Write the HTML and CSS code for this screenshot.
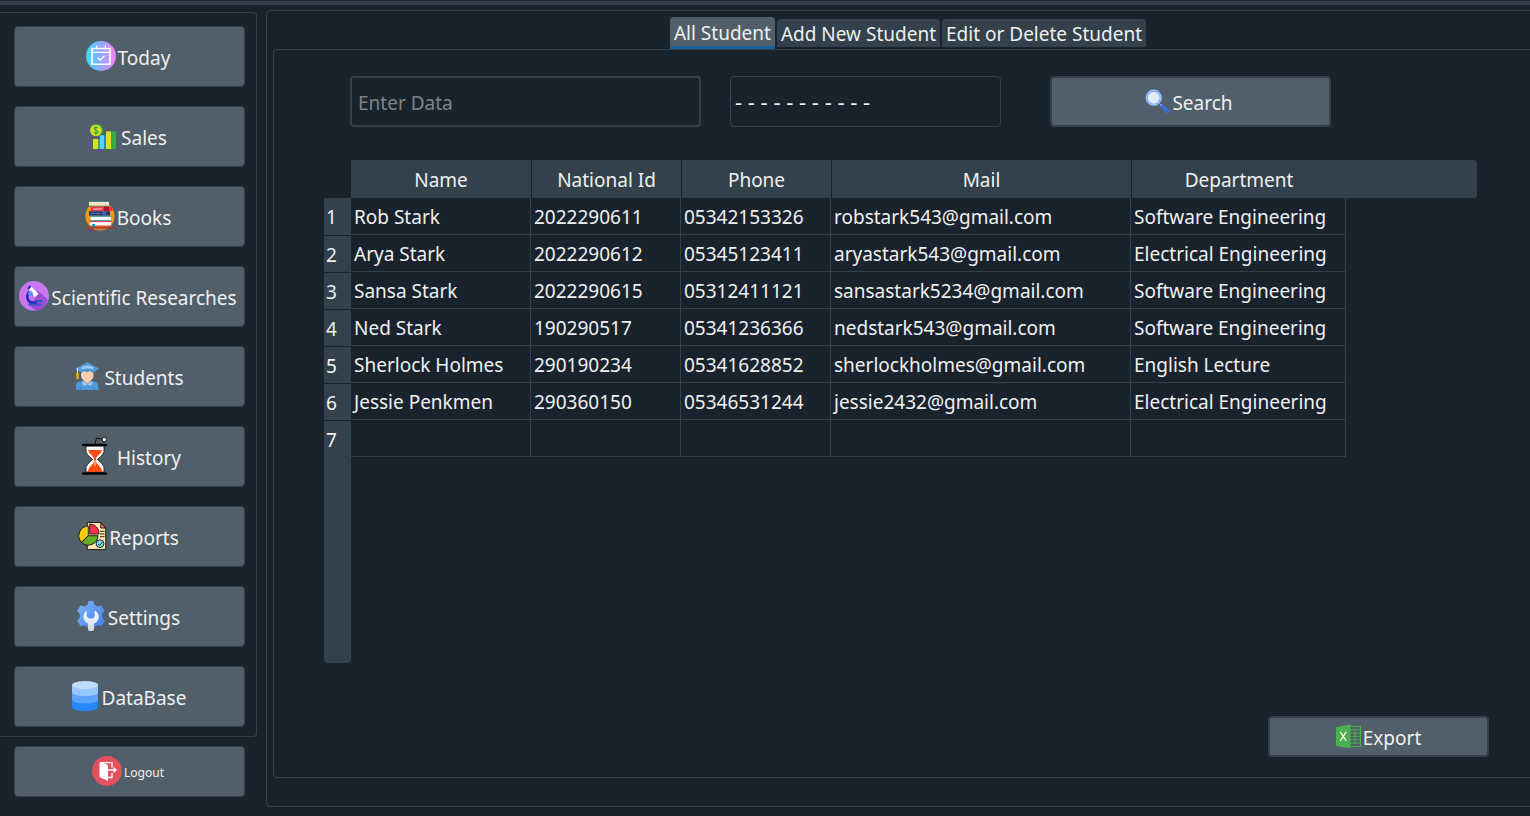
FILE: index.html
```html
<!DOCTYPE html>
<html lang="en">
<head>
<meta charset="utf-8">
<title>Students</title>
<link rel="stylesheet" href="styles.css">
</head>
<body>
<div class="toolbar"></div>
<div class="app">
  <aside class="sidebar">
    <nav class="menu">
      <button class="btn" type="button">
        <svg class="icon" viewBox="0 0 30 30" aria-hidden="true"><defs><linearGradient id="today" x1="0" x2="1" y1="0" y2="0"><stop offset="0" stop-color="#3bdcf8"/><stop offset=".5" stop-color="#8fa9fb"/><stop offset="1" stop-color="#fb80fa"/></linearGradient></defs><circle cx="15" cy="15" r="15" fill="url(#today)"/><g fill="none" stroke="#fff"><path d="M6 7.500h18v15.700H6z" stroke-width="1.600"/><path d="M6 11.400h18M10.600 4.500v3M19.400 4.500v3" stroke-width="1.200"/><path d="M11.700 16.700l2.600 2.300 4.200-4.200" stroke-width="1.500"/></g></svg>
        <span>Today</span></button>
      <button class="btn" type="button">
        <svg class="icon" viewBox="0 0 30 30" aria-hidden="true"><circle cx="8.500" cy="9.300" r="5.800" fill="#33ab47"/><circle cx="6.800" cy="9.300" r="5.800" fill="#d6df23"/><path d="M9 7.200C8.200 5.800 4.900 6 5 7.700s3.800 1.300 4 3-3 2-4.100.6M6.900 5v9" fill="none" stroke="#33ab47" stroke-width="1.100"/><path d="M4 18h5v10H4z" fill="#d6df23"/><path d="M9 18h2v10H9z" fill="#33ab47"/><path d="M11 14.300h4V28h-4z" fill="#57d5f7"/><path d="M15 14.300h2V28h-2z" fill="#1c86cf"/><path d="M17 10.300h5V28h-5z" fill="#d6df23"/><path d="M22 10.300h4q1 0 1 1V28h-5z" fill="#33ab47"/></svg>
        <span>Sales</span></button>
      <button class="btn" type="button">
        <svg class="icon" viewBox="0 0 30 30" aria-hidden="true"><circle cx="15" cy="15" r="14.500" fill="#fd9713"/><path d="M4 1h20v4H4z" fill="#fbe3bd"/><path d="M4 .5h20M4 5.200h20" stroke="#2a8f86"/><path d="M5.700 5.700H26l1.500 1.500V10H5.700z" fill="#f0354b"/><path d="M19 5.700h5V10h-5z" fill="#b20f2c"/><path d="M8 8h9" stroke="#ff9aa0" stroke-width="1.500"/><path d="M4 10.200h21v4.500H4z" fill="#263c7d"/><path d="M17 10.200h4v4.500h-4z" fill="#42639f"/><path d="M6 12.500h9" stroke="#4c70b0"/><path d="M5.700 15.300H26v4.400H5.700z" fill="#f7fbfb"/><path d="M5 15.300h21M5 19.700h21" stroke="#26958f"/><path d="M5 20.500h21V25H5z" fill="#fff"/><path d="M5 20.600h21M5 25h21" stroke="#e92f42"/><path d="M7 23h3v4H7z" fill="#139bd4"/><path d="M0 26.700h30" stroke="#a63e30" stroke-width="1.800"/><path d="M9 28h12q-6 3-12 0" fill="#c87a45"/></svg>
        <span>Books</span></button>
      <button class="btn" type="button">
        <svg class="icon" viewBox="0 0 30 30" aria-hidden="true"><circle cx="15" cy="15" r="15" fill="#c878ef"/><path d="M18 9l11 10a15 15 0 0 1-12 11L9 23l7-5z" fill="#9d4bd3"/><path d="M10.500 10.500c-4 5-2.500 10.500 4 11.500h3" fill="none" stroke="#2726ba" stroke-width="2.600"/><path d="M9.500 23.500h12.500M16 20h7.500" stroke="#3158c9" stroke-width="2"/><path d="M9.500 7.500l2.500-2.300 7.500 7.600-3.400 3.500z" fill="#fff"/><path d="M9 8l2.500-3" stroke="#2726ba" stroke-width="2"/><circle cx="11.500" cy="12.500" r="2.500" fill="#668ef6"/></svg>
        <span>Scientific Researches</span></button>
      <button class="btn" type="button">
        <svg class="icon" viewBox="0 0 30 30" aria-hidden="true"><path d="M4 29v-4q0-4 5-4.700l6-1 6 1q5 .7 5.300 4.700v4z" fill="#4e9adb"/><path d="M11 20l4.300 3.500L19.700 20l1 3-3 2-2.400-2-2.400 2-3-2z" fill="#9cc9ef"/><path d="M12 16h6.500v4l-3.200 3-3.300-3z" fill="#f2b48f"/><path d="M9 10h12.500v5q-1 5-6.200 6-5.300-1-6.300-6z" fill="#ffd0ae"/><path d="M9 7h12.500v6q-1-2.500-3.500-3-3 1.600-6 0-2 .5-3 3z" fill="#3a5976"/><path d="M15.300 1l12 6.700-5.500 3.800q-6.500-3.500-13 0L3 7.700z" fill="#4e9adb"/><path d="M9.500 6q6-3 11.800 0v2.500q-6-2-11.800 0z" fill="#9cc9ef"/><path d="M5.500 7v6" stroke="#ffe4a4"/><path d="M4.300 12h2.400v6H4.300z" fill="#edb311"/><path d="M8.300 26v3M22 26v3" stroke="#3477b5"/></svg>
        <span>Students</span></button>
      <button class="btn" type="button">
        <svg class="icon icon-lg" viewBox="0 0 40 40" aria-hidden="true"><path d="M11 10h18v5q0 3-6.500 8.500Q29 29 29 32v4H11v-4q0-3 6.500-8.500Q11 18 11 15z" fill="#fff" stroke="#111" stroke-width=".8"/><path d="M13 14h14q-.5 3-4 5.500-2 1.500-2 4.500t2 4.500q3.500 3 4.500 7.500h-15q1-4.500 4.500-7.500 2-1.500 2-4.500t-2-4.500Q13.500 17 13 14z" fill="#ff4d12"/><path d="M19.300 24v6M20.700 24v6" stroke="#fff" stroke-width=".5"/><path d="M8.300 9h22.400M8.300 37.500h22.400" stroke="#050505" stroke-width="2.700" stroke-linecap="round"/><path d="M20 8l1.500-6 6 1.300" fill="none" stroke="#111"/><circle cx="29.300" cy="3.500" r="2.200" fill="#fff" stroke="#111"/></svg>
        <span>History</span></button>
      <button class="btn" type="button">
        <svg class="icon" viewBox="0 0 30 30" aria-hidden="true"><g stroke="#141414" stroke-width=".9"><path d="M10.300 1.500h13.500L28.700 7v21.500H10.300z" fill="#fee5aa"/><path d="M23.800 1.500V7h4.900z" fill="#fa705b"/><path d="M23 10.300h4.500M23 13h4.500M23 15.700h4.500"/><path d="M11.300 14.500V5A9.700 9.700 0 0 0 4.500 21.300z" fill="#ffcd0c"/><path d="M11.300 14.700h9.700A9.700 9.700 0 0 1 4.500 21.300z" fill="#63ad25"/><path d="M12.700 13V3A9.400 9.400 0 0 1 22 13z" fill="#ff3150"/><circle cx="23" cy="22.700" r="3.900" fill="#75e5f2"/><path d="M21 22.800l1.600 1.600 2.800-3.200" fill="none"/></g></svg>
        <span>Reports</span></button>
      <button class="btn" type="button">
        <svg class="icon" viewBox="0 0 30 30" aria-hidden="true"><defs><linearGradient id="gear" x1="0" y1="0" x2="1" y2="1"><stop offset="0" stop-color="#82b2fd"/><stop offset="1" stop-color="#3d7dea"/></linearGradient><linearGradient id="wrench" x1="0" y1="0" x2="0" y2="1"><stop offset="0" stop-color="#fff"/><stop offset="1" stop-color="#cfd3de"/></linearGradient></defs><path d="M12.500 0h5l1 3.800 3 1.800L25.300 4.500 28.700 10l-2.600 3v3.500l2.800 3-3.400 5.700-4-1-3 1.800-1 3h-5l-1-3-3-1.800-4 1L1 19.500l2.800-3V13L1 10l3.500-5.500 4 1.100 3-1.800z" fill="url(#gear)"/><path d="M10.600 9.500Q7 12 7.500 17q1 4 4.500 5.500V28.500q0 1.500 3 1.500t3-1.500V22.500q4.300-2 4.800-6 .2-4.500-4.100-7v5.700L17 17.500h-4l-2.400-2.300z" fill="url(#wrench)"/></svg>
        <span>Settings</span></button>
      <button class="btn" type="button">
        <svg class="icon" viewBox="0 0 30 30" aria-hidden="true"><path d="M2 19v7c0 5.300 26 5.300 26 0v-7z" fill="#2387fd"/><path d="M2 11v7.500c0 5.300 26 5.300 26 0V11z" fill="#5ba5fe"/><path d="M2 4v7c0 5.300 26 5.300 26 0V4z" fill="#99c8ff"/><ellipse cx="15" cy="4" rx="13" ry="4" fill="#c0dcff"/></svg>
        <span>DataBase</span></button>
    </nav>
    <button class="btn btn-logout" type="button">
      <svg class="icon" viewBox="0 0 30 30" aria-hidden="true"><circle cx="15" cy="15" r="15" fill="#e35060"/><path d="M7.500 7.500Q7.500 6 9 6l6 2.500q1 .5 1 2V25L8.500 21.500q-1-.5-1-1.500z" fill="#fff"/><path d="M9 6.600h11v5M20 17v4.500h-4M15 14h8" fill="none" stroke="#fff" stroke-width="1.300"/><path d="M21.500 11l3.500 3-3.500 3z" fill="#fff"/></svg>
      <span>Logout</span></button>
  </aside>

  <main class="main">
    <div class="tabs" role="tablist">
      <button class="tab tab-active" type="button" role="tab" aria-selected="true">All Student</button>
      <button class="tab" type="button" role="tab" aria-selected="false">Add New Student</button>
      <button class="tab" type="button" role="tab" aria-selected="false">Edit or Delete Student</button>
    </div>
    <section class="page">
      <form class="search">
        <input class="field" type="text" placeholder="Enter Data" aria-label="Enter Data">
        <select class="combo" aria-label="Filter"><option>- - - - - - - - - - -</option></select>
        <button class="btn btn-thick btn-search" type="button">
          <svg class="icon icon-sm" viewBox="0 0 25 25" aria-hidden="true"><path d="M15.500 15.500l3 3" stroke="#9cc5f4" stroke-width="2"/><path d="M17.500 17.500l5 5" stroke="#3d6fd0" stroke-width="4" stroke-linecap="round"/><circle cx="8.700" cy="8.700" r="7.200" fill="#e1ebfc" stroke="#709bf4" stroke-width="2.400"/><circle cx="8.700" cy="8.700" r="7.200" fill="none" stroke="#b3d3fc" stroke-width=".9"/></svg>
          <span>Search</span></button>
      </form>

      <table class="grid">
        <colgroup><col class="c-num"><col class="c-name"><col class="c-id"><col class="c-phone"><col class="c-mail"><col class="c-dept"><col></colgroup>
        <thead>
          <tr><td class="corner"></td><th scope="col">Name</th><th scope="col">National Id</th><th scope="col">Phone</th><th scope="col">Mail</th><th scope="col">Department</th><td class="head-fill"></td></tr>
        </thead>
        <tbody>
          <tr><th scope="row">1</th><td>Rob Stark</td><td>2022290611</td><td>05342153326</td><td>robstark543@gmail.com</td><td>Software Engineering</td></tr>
          <tr><th scope="row">2</th><td>Arya Stark</td><td>2022290612</td><td>05345123411</td><td>aryastark543@gmail.com</td><td>Electrical Engineering</td></tr>
          <tr><th scope="row">3</th><td>Sansa Stark</td><td>2022290615</td><td>05312411121</td><td>sansastark5234@gmail.com</td><td>Software Engineering</td></tr>
          <tr><th scope="row">4</th><td>Ned Stark</td><td>190290517</td><td>05341236366</td><td>nedstark543@gmail.com</td><td>Software Engineering</td></tr>
          <tr><th scope="row">5</th><td>Sherlock Holmes</td><td>290190234</td><td>05341628852</td><td>sherlockholmes@gmail.com</td><td>English Lecture</td></tr>
          <tr><th scope="row">6</th><td>Jessie Penkmen</td><td>290360150</td><td>05346531244</td><td>jessie2432@gmail.com</td><td>Electrical Engineering</td></tr>
          <tr><th scope="row">7</th><td></td><td></td><td></td><td></td><td></td></tr>
        </tbody>
        <tfoot>
          <tr><td class="rail"></td></tr>
        </tfoot>
      </table>

      <button class="btn btn-thick btn-export" type="button">
        <svg class="icon icon-sm" viewBox="0 0 25 25" aria-hidden="true"><path d="M14 2.500h10.500v20H14" fill="none" stroke="#4caf50" stroke-width="1.100"/><path d="M14 5.700h10M14 9h10M14 12.300h10M14 15.600h10M14 19h10M19 5.500V19.500" stroke="#4caf50"/><path d="M0 3l14.500-2.500v24L0 22z" fill="#4caf50"/><path d="M4.200 7.800l6 9M10.200 7.800l-6 9" stroke="#fff" stroke-width="1.200"/></svg>
        <span>Export</span></button>
    </section>
  </main>
</div>
</body>
</html>
```
FILE: styles.css
```css
* {
  box-sizing: border-box;
}

body {
  display: flex;
  flex-direction: column;
  min-height: 100vh;
  margin: 0;
  padding-top: 1px;
  overflow-x: hidden;
  background: #19232d;
  color: #f0f0f0;
  font: 19px/24px "Noto Sans", Tahoma, sans-serif;
}

button,
input,
select {
  color: inherit;
  font: inherit;
}

.toolbar {
  height: 4px;
  background: #32414b;
}

.app {
  display: flex;
  flex: 1;
  gap: 9px;
  padding: 5px 0 9px;
}

.sidebar {
  flex: none;
  width: 257px;
  padding-top: 2px;
}

.menu {
  display: flex;
  flex-direction: column;
  gap: 19px;
  padding: 13px 11px 9px 14px;
  border: 1px solid #32414b;
  border-left: 0;
  border-radius: 0 4px 4px 0;
}

.btn {
  display: flex;
  align-items: center;
  justify-content: center;
  gap: 2px;
  height: 61px;
  padding: 0 3px 2px 0;
  border: 1px solid #32414b;
  border-radius: 4px;
  background: #505f69;
  white-space: nowrap;
}

.btn span {
  padding-top: 4px;
}

.btn-logout {
  width: 231px;
  height: 51px;
  margin: 9px 0 0 14px;
  font-size: 12px;
}

.btn-thick {
  padding-bottom: 0;
  border-width: 2px;
}

.btn-thick span {
  padding-top: 2px;
}

.icon {
  flex: none;
  width: 30px;
  height: 30px;
}

.icon-lg {
  width: 40px;
  height: 40px;
}

.icon-sm {
  width: 25px;
  height: 25px;
}

.main {
  display: flex;
  flex: 1;
  flex-direction: column;
  margin-right: -20px;
  padding: 6px 6px 28px;
  border: 1px solid #32414b;
  border-radius: 4px;
}

.tabs {
  display: flex;
  align-items: center;
  justify-content: center;
  gap: 2px;
}

.tab {
  height: 28px;
  padding: 2px 4px 0;
  border: 0;
  border-radius: 4px 4px 0 0;
  background: #32414b;
}

.tab-active {
  height: 32px;
  border-bottom: 3px solid #1464a0;
  background: #505f69;
}

.page {
  display: flex;
  flex: 1;
  flex-direction: column;
  padding: 26px 53px 20px 50px;
  border: 1px solid #32414b;
  border-radius: 4px;
}

.search {
  display: flex;
  margin: 0 0 33px 26px;
}

.field {
  width: 351px;
  height: 51px;
  padding: 2px 6px 0;
  border: 2px solid #32414b;
  border-radius: 4px;
  background: #19232d;
}

.field::placeholder {
  color: #808386;
  opacity: 1;
}

.combo {
  width: 271px;
  height: 51px;
  margin: 0 49px 0 29px;
  padding: 0 4px 2px;
  border: 1px solid #32414b;
  border-radius: 4px;
  appearance: none;
  background: #19232d;
  font-size: 22px;
}

.btn-search {
  width: 281px;
  height: 51px;
}

.grid {
  width: calc(100% - 12px);
  border-spacing: 0;
  table-layout: fixed;
}

.c-num { width: 27px; }
.c-name { width: 180px; }
.c-id,
.c-phone { width: 150px; }
.c-mail { width: 300px; }
.c-dept { width: 215px; }

.grid th {
  background: #32414b;
  font-weight: 400;
}

.grid thead th {
  height: 38px;
  padding: 2px 0 0;
}

.grid thead th + th {
  border-left: 1px solid #19232d;
}

.head-fill {
  border-radius: 0 4px 4px 0;
  background: #32414b;
}

.grid tbody th {
  height: 37px;
  padding: 1px 2px 0;
  text-align: left;
}

.grid tbody tr + tr th {
  border-top: 1px solid #19232d;
}

.grid tbody td {
  padding: 2px 3px 0;
  border-right: 1px solid #32414b;
  border-bottom: 1px solid #32414b;
  white-space: nowrap;
}

.rail {
  height: 206px;
  border-radius: 0 0 4px 4px;
  background: #32414b;
}

.btn-export {
  align-self: flex-end;
  width: 221px;
  height: 41px;
  margin-top: auto;
  padding-right: 0;
}
```
